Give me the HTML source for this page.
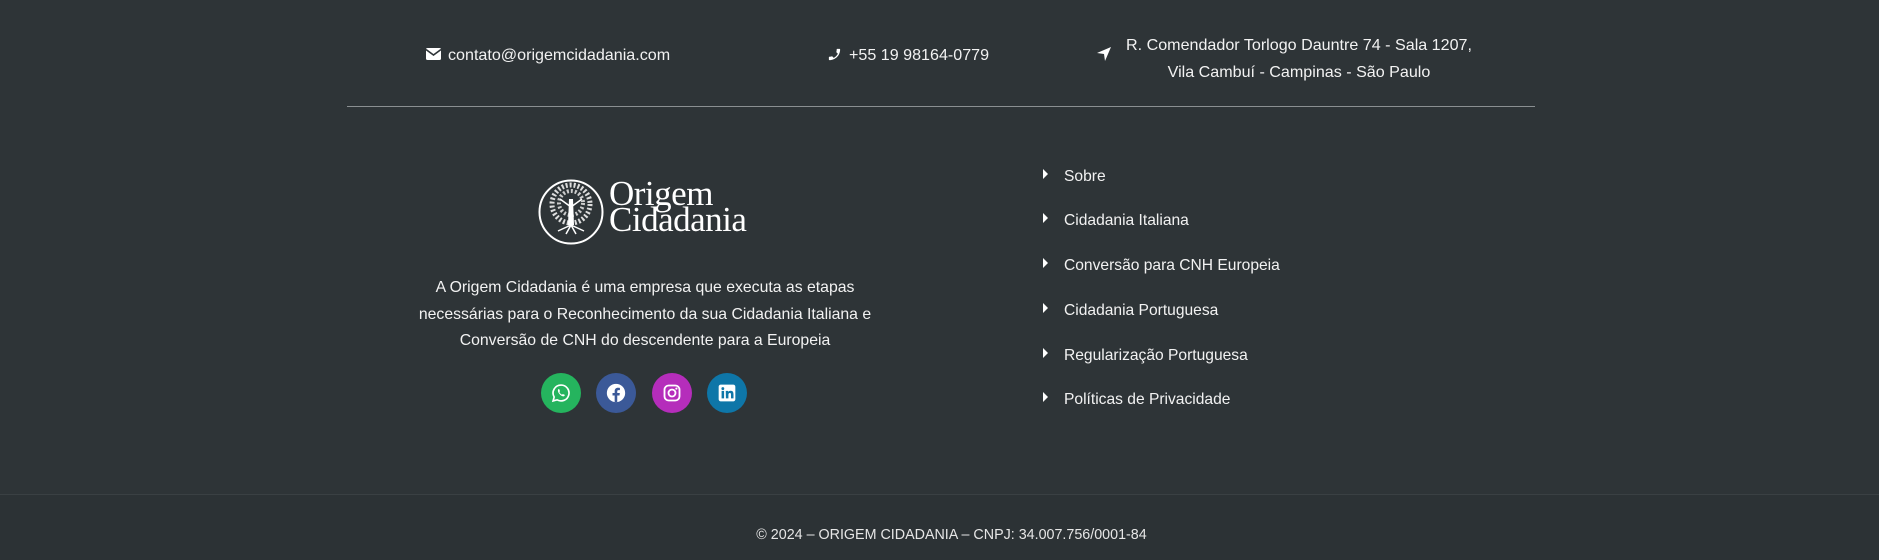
<!DOCTYPE html>
<html><head><meta charset="utf-8"><style>
*{margin:0;padding:0;box-sizing:border-box}
body{width:1879px;height:560px;background:#2e3437;font-family:"Liberation Sans",sans-serif;color:#f2f2f2;position:relative;overflow:hidden}
.a{position:absolute;white-space:nowrap}
.t{font-size:16.1px}
.links div{position:absolute;left:1043px;font-size:15.6px;transform:translateY(-50%)}
.links span{display:inline-block;width:0;height:0;border-top:5px solid transparent;border-bottom:5px solid transparent;border-left:5px solid #fff;margin-right:16px;vertical-align:2px}
.soc{position:absolute;width:40px;height:40px;border-radius:50%;top:373px;display:flex;align-items:center;justify-content:center}
</style></head><body>
<svg class="a" style="left:426px;top:48px" width="15" height="12" viewBox="0 0 15 12"><rect width="15" height="12" rx="1.5" fill="#fff"/><path d="M0 1.5 L7.5 7 L15 1.5" stroke="#2e3437" stroke-width="1.6" fill="none"/></svg>
<div class="a t" style="left:448px;top:46px">contato@origemcidadania.com</div>
<svg class="a" style="left:827px;top:47px" width="15" height="15" viewBox="0 0 24 24"><path fill="#fff" d="M20 15.5c-1.2 0-2.5-.2-3.600-.6-.3-.1-.7 0-1 .2l-2.2 2.2c-2.8-1.4-5.1-3.8-6.6-6.6l2.2-2.2c.3-.3.4-.7.2-1-.3-1.100-.5-2.300-.5-3.500 0-.6-.4-1-1-1H4c-.6 0-1 .4-1 1 0 9.4 7.6 17 17 17 .6 0 1-.4 1-1v-3.500c0-.6-.4-1-1-1z" transform="scale(-1,1) translate(-24,0)"/></svg>
<div class="a t" style="left:849px;top:46px">+55 19 98164-0779</div>
<svg class="a" style="left:1097px;top:47px" width="14" height="14" viewBox="0 0 14 14"><path fill="#fff" d="M14 0 L0 6 L7 7 L8 14 Z"/></svg>
<div class="a t" style="left:1084px;width:430px;top:32px;text-align:center;white-space:normal;line-height:27px">R. Comendador Torlogo Dauntre 74 - Sala 1207,<br>Vila Cambuí - Campinas - São Paulo</div>
<div class="a" style="left:347px;top:106px;width:1188px;height:1px;background:#8a8f91"></div>
<svg class="a" style="left:538px;top:179px" width="66" height="66" viewBox="0 0 66 66"><circle cx="33" cy="33" r="31.5" fill="none" stroke="#fff" stroke-width="2"/><circle cx="33" cy="25" r="19" fill="none" stroke="#ddd" stroke-width="5" stroke-dasharray="2 2"/><circle cx="33" cy="24" r="12" fill="none" stroke="#ccc" stroke-width="4" stroke-dasharray="2 2"/><path d="M31 20 L30 46 L36 46 L35 20 Z" fill="#fff"/><path d="M33 46 L20 52 M33 46 L46 52 M33 46 L28 55 M33 46 L38 55 M33 28 L22 20 M33 28 L44 20" stroke="#fff" stroke-width="1.5"/></svg>
<div class="a" style="left:609px;top:181px;font-family:'Liberation Serif',serif;font-size:35px;line-height:26px;color:#fff;letter-spacing:-0.5px">Origem<br>Cidadania</div>
<div class="a" style="left:395px;width:500px;top:275px;text-align:center;font-size:15.8px;line-height:26.5px;white-space:normal">A Origem Cidadania é uma empresa que executa as etapas necessárias para o Reconhecimento da sua Cidadania Italiana e Conversão de CNH do descendente para a Europeia</div>
<div class="soc" style="left:541px;background:#25b45e"><svg width="20" height="20" viewBox="0 0 24 24"><path d="M12 2.5a9.5 9.5 0 0 0-8.2 14.3L2.5 21.5l4.8-1.3A9.5 9.5 0 1 0 12 2.5z" fill="none" stroke="#fff" stroke-width="2"/><path d="M8.5 8c.5-1 1.3-1 1.6 0l.6 1.6c.1.4-.6 1-.6 1.3.6 1.4 1.7 2.5 3 3 .3 0 .9-.7 1.3-.6l1.6.7c.8.3.6 1.2-.2 1.8-1.5 1-5.5-1.5-7-4.600-.6-1.300-.6-2.400-.3-3.200z" fill="#fff"/></svg></div>
<div class="soc" style="left:596px;background:#3b5998"><svg width="20" height="20" viewBox="0 0 24 24"><circle cx="12" cy="12" r="11" fill="#fff"/><path d="M13.5 23v-8h2.7l.4-3h-3.1v-2c0-.9.3-1.5 1.6-1.5h1.6V5.8c-.3 0-1.3-.1-2.4-.1-2.3 0-3.9 1.4-3.9 4V12H7.8v3h2.6v8z" fill="#3b5998"/></svg></div>
<div class="soc" style="left:652px;background:#b52dbb"><svg width="20" height="20" viewBox="0 0 24 24"><rect x="3" y="3" width="18" height="18" rx="5" fill="none" stroke="#fff" stroke-width="2.2"/><circle cx="12" cy="12" r="4.2" fill="none" stroke="#fff" stroke-width="2.2"/><circle cx="17.3" cy="6.7" r="1.3" fill="#fff"/></svg></div>
<div class="soc" style="left:707px;background:#0e76a8"><svg width="20" height="20" viewBox="0 0 24 24"><rect x="2" y="2" width="20" height="20" rx="2.5" fill="#fff"/><path d="M5.5 9.5h3v9h-3zM7 5a1.7 1.7 0 1 1 0 3.4A1.7 1.7 0 0 1 7 5zM10.5 9.5h2.9v1.3c.4-.8 1.4-1.5 2.9-1.5 3 0 3.5 2 3.5 4.5v4.7h-3v-4.2c0-1 0-2.3-1.4-2.3s-1.7 1.1-1.7 2.2v4.3h-3z" fill="#0e76a8"/></svg></div>
<div class="links">
<div style="top:177px"><span></span>Sobre</div>
<div style="top:221px"><span></span>Cidadania Italiana</div>
<div style="top:266px"><span></span>Conversão para CNH Europeia</div>
<div style="top:311px"><span></span>Cidadania Portuguesa</div>
<div style="top:356px"><span></span>Regularização Portuguesa</div>
<div style="top:400px"><span></span>Políticas de Privacidade</div>
</div>
<div class="a" style="left:0;top:494px;width:1879px;height:66px;background:#2c3235;border-top:1px solid #3a4043"></div>
<div class="a" style="left:12px;width:1879px;top:527px;text-align:center;font-size:14.3px;color:#e6e6e6">© 2024 – ORIGEM CIDADANIA – CNPJ: 34.007.756/0001-84</div>
</body></html>
